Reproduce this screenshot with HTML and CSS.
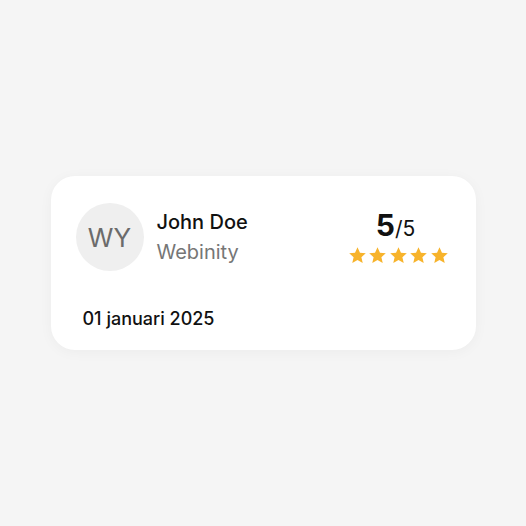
FILE: index.html
```html
<!DOCTYPE html>
<html lang="nl">
<head>
    <meta charset="UTF-8">
    <meta name="viewport" content="width=device-width, initial-scale=1.0">
    <title>Review</title>
    <link rel="stylesheet" href="styles.css">
</head>
<body>
    <div class="review-card">
        <div class="review-top">
            <div class="author">
                <div class="avatar">WY</div>
                <div class="author-info">
                    <div class="author-name">John Doe</div>
                    <div class="author-company">Webinity</div>
                </div>
            </div>
            <div class="rating">
                <div class="score"><b>5</b>/5</div>
                <div class="stars">
                    <svg viewBox="0 0 24 24"><path d="M12 1.5l3.1 6.9 7.4.7-5.6 5 1.7 7.4L12 17.6l-6.6 3.9 1.7-7.4-5.6-5 7.4-.7z"/></svg>
                    <svg viewBox="0 0 24 24"><path d="M12 1.5l3.1 6.9 7.4.7-5.6 5 1.7 7.4L12 17.6l-6.6 3.9 1.7-7.4-5.6-5 7.4-.7z"/></svg>
                    <svg viewBox="0 0 24 24"><path d="M12 1.5l3.1 6.9 7.4.7-5.6 5 1.7 7.4L12 17.6l-6.6 3.9 1.7-7.4-5.6-5 7.4-.7z"/></svg>
                    <svg viewBox="0 0 24 24"><path d="M12 1.5l3.1 6.9 7.4.7-5.6 5 1.7 7.4L12 17.6l-6.6 3.9 1.7-7.4-5.6-5 7.4-.7z"/></svg>
                    <svg viewBox="0 0 24 24"><path d="M12 1.5l3.1 6.9 7.4.7-5.6 5 1.7 7.4L12 17.6l-6.6 3.9 1.7-7.4-5.6-5 7.4-.7z"/></svg>
                </div>
            </div>
        </div>
        <div class="review-date">01 januari 2025</div>
    </div>
</body>
</html>
```
FILE: styles.css
```css
body {
    background: #f5f5f5;
    font-family: Inter, "Noto Sans", sans-serif;
    margin: 0;
    padding: 0;
    height: 526px;
    display: flex;
    align-items: center;
    justify-content: center;
}
.review-card {
    width: 425px;
    height: 174px;
    box-sizing: border-box;
    background: #fff;
    border-radius: 24px;
    box-shadow: 0 2px 14px rgba(0, 0, 0, 0.04);
    padding: 27px 27px 0 25px;
}
.review-top {
    display: flex;
    justify-content: space-between;
    align-items: flex-start;
}
.author {
    display: flex;
    align-items: center;
    gap: 13px;
}
.avatar {
    width: 68px;
    height: 68px;
    border-radius: 50%;
    background: #efefef;
    color: #6b6b6b;
    font-size: 26px;
    display: flex;
    align-items: center;
    justify-content: center;
}
.author-name {
    font-size: 20px;
    font-weight: 500;
    color: #111;
    line-height: 30px;
}
.author-company {
    font-size: 20px;
    color: #767676;
    line-height: 30px;
}
.rating {
    display: flex;
    flex-direction: column;
    align-items: center;
    padding-top: 6px;
}
.score {
    font-size: 21px;
    color: #111;
    line-height: 32px;
    margin-right: 5px;
}
.score b {
    font-size: 30px;
    font-weight: 700;
}
.stars {
    display: flex;
    gap: 1.5px;
    margin-top: 1px;
}
.stars svg {
    width: 19px;
    height: 19px;
    fill: #f7b32b;
}
.review-date {
    margin-top: 37px;
    padding-left: 7px;
    font-size: 18px;
    font-weight: 500;
    line-height: 22px;
    color: #111;
}
```
